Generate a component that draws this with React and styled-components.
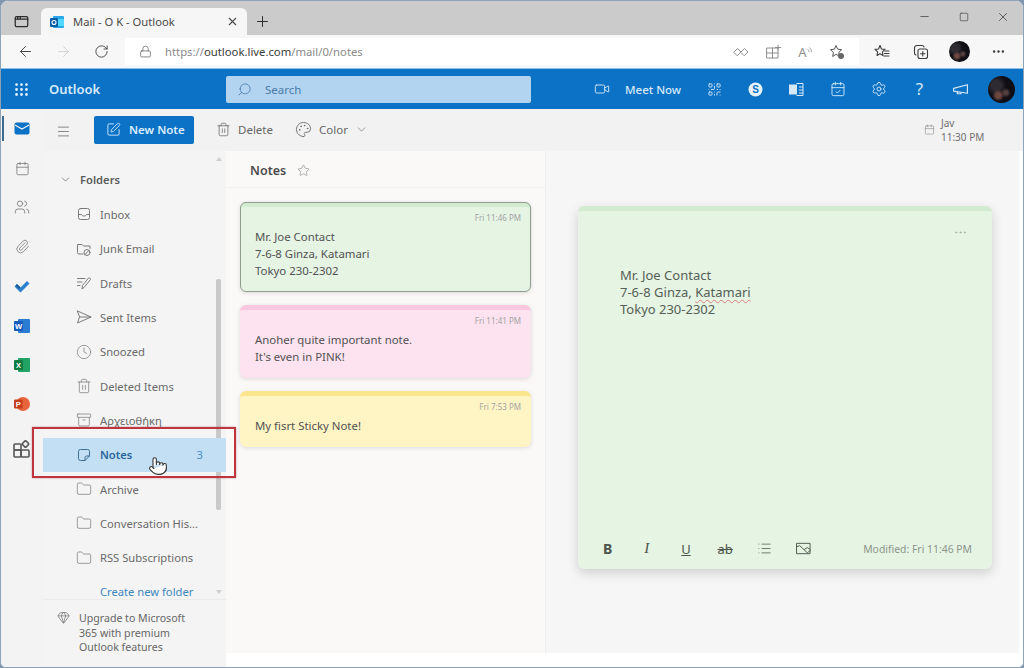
import styled, { createGlobalStyle } from "styled-components";
import {
  ArrowLeft, ArrowRight, RotateCw, Lock, X, Plus, Minus, Square, Star, Ellipsis, Search,
  SquarePen, Trash2, Palette, ChevronDown, Menu, Video, QrCode, Settings,
  CalendarCheck, Calendar, Users, Paperclip, Clock, Archive,
  Folder, Gem, List, Pointer, Grip, AppWindow,
} from "lucide-react";

const GlobalStyle = createGlobalStyle`
  html, body { margin: 0; padding: 0; background: #7f98b2; }
  * { box-sizing: border-box; }
  body { font-family: "Noto Sans", "Open Sans", "Liberation Sans", sans-serif; }
`;

const Window = styled.div`
  width: 1024px;
  height: 668px;
  display: flex;
  flex-direction: column;
  overflow: hidden;
  border: 1px solid #8fa3b7;
  border-radius: 8px 8px 6px 6px;
  background: #fff;
`;

const TabStrip = styled.div`
  height: 34px;
  flex: none;
  display: flex;
  align-items: flex-end;
  background: #cbcbcb;
  color: #2b2b2b;
`;

const StripButton = styled.div`
  width: ${(p) => p.$w || 40}px;
  height: 27px;
  display: flex;
  align-items: center;
  justify-content: center;
`;

const Tab = styled.div`
  width: 206px;
  height: 27px;
  padding: 0 8px 0 9px;
  display: flex;
  align-items: center;
  background: #f6f6f6;
  border-radius: 6px 6px 0 0;
  font-size: 11.2px;
  color: #4a4a4a;
  span { flex: 1; margin: -1px 0 0 9px; }
`;

const WindowControls = styled.div`
  margin-left: auto;
  height: 34px;
  display: flex;
  align-items: center;
  color: #444;
`;

const WindowButton = styled.div`
  width: 39.5px;
  display: flex;
  justify-content: center;
  margin-top: -3px;
`;

const AddressRow = styled.div`
  height: 34px;
  flex: none;
  padding-left: 5px;
  display: flex;
  align-items: center;
  background: #f7f7f7;
  border-bottom: 1px solid #8cc0e8;
`;

const NavButton = styled.div`
  width: 38px;
  display: flex;
  justify-content: center;
  color: ${(p) => (p.$off ? "#d4d4d4" : "#444")};
`;

const AddressField = styled.div`
  width: 734px;
  height: 27px;
  margin-left: 5px;
  padding: 0 6px 0 14px;
  display: flex;
  align-items: center;
  background: #fff;
  font-size: 11.3px;
  color: #8a8a8a;
  b { font-weight: 400; color: #3c3c3c; }
`;

const Url = styled.div`
  flex: 1;
  margin-left: 13px;
`;

const FieldIcon = styled.div`
  width: 32px;
  display: flex;
  justify-content: center;
  align-items: center;
  font-size: 13px;
  color: #8e8e8e;
`;

const BrowserTools = styled.div`
  display: flex;
  align-items: center;
  color: #3c3c3c;
  padding-left: 3px;
`;

const BrowserTool = styled.div`
  width: 39px;
  display: flex;
  justify-content: center;
`;

const Avatar = styled.div`
  width: ${(p) => p.$size}px;
  height: ${(p) => p.$size}px;
  border-radius: 50%;
  flex: none;
  background:
    radial-gradient(circle at 38% 72%, #6d4742 0 9%, transparent 24%),
    radial-gradient(circle at 66% 62%, #54413f 0 7%, transparent 20%),
    radial-gradient(circle at 30% 35%, #2f2b33 0 18%, transparent 40%),
    #0f0e14;
`;

const HeaderBar = styled.header`
  height: 40px;
  flex: none;
  display: flex;
  align-items: center;
  background: #0b72c6;
  color: #d9ecfb;
`;

const Waffle = styled.div`
  width: 40px;
  display: flex;
  justify-content: center;
  color: #e2f0fb;
`;

const Brand = styled.div`
  width: 185px;
  padding-left: 8px;
  font-size: 13px;
  font-weight: 600;
  color: #d8ebfa;
`;

const SearchBox = styled.div`
  width: 305px;
  height: 27px;
  padding-left: 11px;
  display: flex;
  align-items: center;
  gap: 13px;
  border-radius: 2px;
  background: #b2d4f1;
  color: #4b7ba6;
  font-size: 11.5px;
`;

const SearchGlass = styled(Search)`
  transform: scaleX(-1);
`;

const MeetNow = styled.div`
  margin-left: 63px;
  width: 100px;
  display: flex;
  align-items: center;
  gap: 15px;
  font-size: 11.5px;
  font-weight: 500;
  color: #d4e8f9;
  white-space: nowrap;
`;

const HeaderIcon = styled.div`
  width: 41px;
  display: flex;
  justify-content: center;
  font-size: 17px;
  line-height: 20px;
  color: #d4e8f9;
`;

const Body = styled.div`
  flex: 1;
  min-height: 0;
  display: flex;
`;

const Rail = styled.nav`
  width: 42px;
  flex: none;
  background: #f3f3f3;
  display: flex;
  flex-direction: column;
`;

const RailItem = styled.div`
  height: 39.4px;
  flex: none;
  display: flex;
  align-items: center;
  justify-content: center;
  color: #7b7b7b;
  position: relative;
`;

const RailMark = styled.div`
  position: absolute;
  left: 1px;
  top: 7px;
  width: 2px;
  height: 25px;
  background: #3d6b8e;
`;

const RailBottom = styled(RailItem)`
  margin-top: 5px;
  color: #555;
`;

const Main = styled.div`
  flex: 1;
  min-width: 0;
  display: flex;
  flex-direction: column;
`;

const CommandBar = styled.div`
  height: 42px;
  flex: none;
  padding-bottom: 1px;
  display: flex;
  align-items: center;
  background: #f2f2f2;
  color: #666;
  font-size: 11.5px;
`;

const MenuButton = styled.div`
  width: 40px;
  padding-left: 13px;
  margin-right: 11px;
  display: flex;
  margin-top: 4px;
`;

const NewNote = styled.button`
  width: 100px;
  height: 28px;
  border: 0;
  border-radius: 2px;
  padding: 0 0 0 12px;
  display: flex;
  align-items: center;
  gap: 8px;
  background: #0b72c6;
  color: #dbeefc;
  font: 600 11.5px "Noto Sans", sans-serif;
`;

const CommandItem = styled.div`
  margin-left: ${(p) => p.$gap}px;
  display: flex;
  align-items: center;
  gap: ${(p) => p.$inner || 7}px;
`;

const Reminder = styled.div`
  margin-left: auto;
  width: 99px;
  display: flex;
  align-items: center;
  gap: 6px;
  color: #8b8b8b;
  font-size: 10px;
  line-height: 14px;
  div { color: #6f6f6f; }
`;

const Content = styled.div`
  flex: 1;
  min-height: 0;
  display: flex;
`;

const FolderPane = styled.aside`
  width: 183px;
  flex: none;
  display: flex;
  flex-direction: column;
  background: #f4f4f4;
`;

const FolderScroll = styled.div`
  height: 448px;
  flex: none;
  position: relative;
  padding-top: 11px;
`;

const ScrollArrow = styled.div`
  position: absolute;
  left: 173px;
  top: ${(p) => p.$top}px;
  border-left: 3px solid transparent;
  border-right: 3px solid transparent;
  border-${(p) => (p.$up ? "bottom" : "top")}: 4px solid #cfcfcf;
`;

const ScrollThumb = styled.div`
  position: absolute;
  left: 173px;
  top: 128px;
  width: 5px;
  height: 231px;
  background: #c9c9c9;
  border-radius: 2px;
`;

const FolderHeading = styled.div`
  height: 35.3px;
  padding: 0 0 1px 16px;
  display: flex;
  align-items: center;
  gap: 8px;
  font-size: 11.2px;
  font-weight: 600;
  color: #5a5a5a;
`;

const FolderRow = styled.div`
  height: 34.33px;
  padding: 0 23px 0 33px;
  position: relative;
  display: flex;
  align-items: center;
  gap: 8px;
  font-size: 11.2px;
  background: ${(p) => (p.$active ? "#c3dff3" : "transparent")};
  color: ${(p) => (p.$active ? "#2a6597" : "#6a6a6a")};
  font-weight: ${(p) => (p.$active ? 600 : 400)};
  > svg { flex: none; color: ${(p) => (p.$active ? "#3d6e96" : "#7a7a7a")}; }
  span { flex: 1; white-space: nowrap; }
`;

const Count = styled.em`
  font-style: normal;
  font-weight: 400;
  color: #4a8dc4;
`;

const Callout = styled.div`
  position: absolute;
  inset: -11px -10px -6px -11px;
  border: 2px solid #c0343d;
  box-shadow: 0 0 2px rgba(120, 40, 40, 0.4);
  pointer-events: none;
`;

const Cursor = styled.div`
  position: absolute;
  left: 105px;
  top: 18px;
  svg { color: #333; fill: #fff; }
`;

const CreateFolder = styled.div`
  height: 24px;
  padding: 10px 0 0 57px;
  font-size: 11.2px;
  line-height: 14px;
  color: #3d87bd;
`;

const Upsell = styled.div`
  flex: 1;
  padding: 11px 0 0 14px;
  display: flex;
  gap: 9px;
  border-top: 1px solid #ebebeb;
  font-size: 10.6px;
  line-height: 14.5px;
  color: #666;
  svg { flex: none; color: #6d6d6d; }
`;

const Stage = styled.div`
  flex: 1;
  min-width: 0;
  display: flex;
  padding: 0 4px 14px 0;
  background: #fff;
`;

const NotesPane = styled.section`
  width: 320px;
  flex: none;
  background: #faf9f8;
  border-right: 1px solid #efeeed;
`;

const NotesHeader = styled.div`
  height: 37px;
  padding: 2px 0 0 24px;
  display: flex;
  align-items: center;
  gap: 11px;
  font-size: 12.5px;
  font-weight: 600;
  color: #4b4b4b;
  border-bottom: 1px solid #f1f0ef;
  svg { color: #8a8a8a; }
`;

const NoteList = styled.div`
  padding: 14px 14px 0 14px;
  display: flex;
  flex-direction: column;
  gap: 13px;
`;

const NoteCard = styled.article`
  padding: 5px 10px 13.5px 15px;
  border-radius: 6px;
  border-top: 5px solid ${(p) => p.$strip};
  background: ${(p) => p.$fill};
  outline: ${(p) => (p.$selected ? "1px solid #8f9c90" : "none")};
  outline-offset: -1px;
  box-shadow: 0 1px 4px rgba(0, 0, 0, 0.13);
  font-size: 11.4px;
  line-height: 17px;
  color: #525252;
`;

const NoteDate = styled.div`
  height: 15.5px;
  font-size: 8px;
  line-height: 12px;
  text-align: right;
  color: #a3a3a3;
`;

const ReadingPane = styled.main`
  flex: 1;
  min-width: 0;
  padding: 55px 27px 0 32px;
  background: #f7f6f6;
`;

const Sticky = styled.article`
  height: 363px;
  display: flex;
  flex-direction: column;
  padding: 0 20px 0 24px;
  border-top: 5px solid #d3ebd0;
  border-radius: 6px;
  background: #e5f4e3;
  box-shadow: 0 4px 12px rgba(0, 0, 0, 0.16);
`;

const StickyMenu = styled.div`
  align-self: flex-end;
  margin-top: 12px;
  height: 18px;
  color: #9aa39a;
  padding-right: 4px;
`;

const StickyText = styled.div`
  margin: 26px 0 0 18px;
  font-size: 13px;
  line-height: 17px;
  color: #566056;
  flex: 1;
  u { text-decoration: underline wavy #d98080 1px; text-underline-offset: 2px; }
`;

const Formatting = styled.div`
  height: 39px;
  margin: 0 0 1px -10px;
  display: flex;
  align-items: center;
  color: #4b554b;
`;

const FormatButton = styled.div`
  width: 39.2px;
  margin-left: -4px;
  margin-right: 4px;
  display: flex;
  justify-content: center;
  font-family: ${(p) => (p.$serif ? '"Liberation Serif", serif' : "inherit")};
  font-size: ${(p) => p.$size || 13}px;
  font-weight: ${(p) => p.$weight || 400};
  font-style: ${(p) => (p.$italic ? "italic" : "normal")};
  text-decoration: ${(p) => p.$line || "none"};
`;

const Modified = styled.div`
  margin-left: auto;
  font-size: 10.4px;
  color: #8d948d;
`;

function OutlookMark() {
  return (
    <svg width="14" height="14" viewBox="0 0 14 14">
      <rect x="3" y="1" width="11" height="12" rx="1" fill="#28a8ea" />
      <rect x="7" y="4" width="7" height="7" fill="#50d9ff" />
      <rect x="0" y="3" width="8" height="9" rx="1" fill="#0a5fa8" />
      <circle cx="4" cy="7.5" r="2" fill="none" stroke="#fff" strokeWidth="1.1" />
    </svg>
  );
}

function LineIcon({ size = 16, width = 1, children }) {
  return (
    <svg width={size} height={size} viewBox="0 0 16 16" fill="none" stroke="currentColor" strokeWidth={width} strokeLinecap="round" strokeLinejoin="round">
      {children}
    </svg>
  );
}

function MailFilled() {
  return (
    <svg width="16" height="13" viewBox="0 0 16 13">
      <rect x="0.5" y="0.5" width="15" height="12" rx="2" fill="#0b72c6" />
      <path d="M1 3 L8 7 L15 3" fill="none" stroke="#f3f3f3" strokeWidth="1.1" />
    </svg>
  );
}

function AppsIcon() {
  return (
    <svg width="18" height="18" viewBox="0 0 18 18" fill="none" stroke="currentColor" strokeWidth="1.6">
      <rect x="1" y="4" width="7" height="6" rx="1" />
      <rect x="1" y="10" width="7" height="7" rx="1" />
      <rect x="8" y="10" width="8" height="7" rx="1" />
      <rect x="10" y="1.5" width="5" height="5" rx="1" transform="rotate(45 12.5 4)" />
    </svg>
  );
}

function ChromeAppIcon({ back, front, letter }) {
  return (
    <svg width="16" height="16" viewBox="0 0 16 16">
      <rect x="4" y="1" width="12" height="14" rx="1" fill={back} />
      <rect x="0" y="3" width="9" height="10" rx="1" fill={front} />
      <text x="4.5" y="11" fontSize="7.5" fontWeight="700" textAnchor="middle" fill="#fff" fontFamily="Liberation Sans">{letter}</text>
    </svg>
  );
}

function PowerPointIcon() {
  return (
    <svg width="16" height="16" viewBox="0 0 16 16">
      <circle cx="9" cy="8" r="7" fill="#e8643c" />
      <rect x="0" y="3.5" width="8.5" height="9" rx="1" fill="#c43e1c" />
      <text x="4.2" y="11" fontSize="7.5" fontWeight="700" textAnchor="middle" fill="#fff" fontFamily="Liberation Sans">P</text>
    </svg>
  );
}

function TodoIcon() {
  return (
    <svg width="16" height="13" viewBox="0 0 16 13">
      <path d="M0.5 6.5 L3 4 L6.5 7.5 L13 1 L15.5 3.5 L6.5 12.5 Z" fill="#2e7fd0" />
      <path d="M3 4 L6.5 7.5 L5 9 L1.5 5.5 Z" fill="#1a5a9c" />
    </svg>
  );
}

function SkypeIcon() {
  return (
    <svg width="15" height="15" viewBox="0 0 15 15">
      <circle cx="7.5" cy="7.5" r="7" fill="#e6f2fb" />
      <text x="7.5" y="11" fontSize="10" fontWeight="700" textAnchor="middle" fill="#0b72c6" fontFamily="Liberation Sans">S</text>
    </svg>
  );
}

function OfficeMark() {
  return (
    <svg width="15" height="15" viewBox="0 0 15 15" fill="none" stroke="#d4e8f9">
      <rect x="0.5" y="3" width="7" height="9" fill="#d4e8f9" />
      <path d="M7.5 1.5 H14 V13.5 H7.5 M10 5 H14 M10 8 H14 M10 11 H14" />
    </svg>
  );
}

const InboxIcon = () => (
  <LineIcon><rect x="2.5" y="2.5" width="11" height="11" rx="2" /><path d="M2.5 8.5 H5.5 C6 10.5 10 10.5 10.5 8.5 H13.5" /></LineIcon>
);
const JunkIcon = () => (
  <LineIcon><path d="M7 13 H3 A1.5 1.5 0 0 1 1.5 11.5 V3.5 H6 L7.5 5 H14 V7.5" /><circle cx="11" cy="11.5" r="3" /><path d="M9 13.5 L13 9.5" /></LineIcon>
);
const DraftIcon = () => (
  <LineIcon><path d="M1.5 3.5 H9 M1.5 7 H6 M1.5 10.5 H4" /><path d="M6 13.5 L6.5 10.5 L12.5 3 A1.4 1.4 0 0 1 14.5 4.5 L8.5 12 Z" /></LineIcon>
);
const SendIcon = () => (
  <LineIcon><path d="M1.5 2 L15 8 L1.5 14 L3.5 8 Z M3.5 8 H15" /></LineIcon>
);
const NoteIcon = () => (
  <LineIcon><path d="M9 13.5 H4.5 A2 2 0 0 1 2.5 11.5 V4.5 A2 2 0 0 1 4.5 2.5 H11.5 A2 2 0 0 1 13.5 4.5 V9 L9 13.5 V10.5 A1.5 1.5 0 0 1 10.5 9 H13.5" /></LineIcon>
);
const ReadingModeIcon = () => (
  <LineIcon><path d="M1 8 L4.5 4.5 L8 8 L4.5 11.5 Z M8 8 L11.5 4.5 L15 8 L11.5 11.5 Z" /></LineIcon>
);
const SplitIcon = () => (
  <LineIcon><rect x="2" y="4" width="11" height="10" /><path d="M7.5 4 V14 M2 9 H13 M13 1 V6 M10.5 3.5 H15.5" /></LineIcon>
);
const SoundWaves = () => (
  <svg width="5" height="10" viewBox="0 0 5 10" fill="none" stroke="currentColor" strokeWidth="0.8">
    <path d="M0.5 2 Q2 3 2 5 M2.5 0.5 Q4.5 2 4.5 5" />
  </svg>
);
const FavAddIcon = () => (
  <svg width="16" height="16" viewBox="0 0 16 16" fill="none" stroke="#555">
    <path d="M7 1.5 L8.7 5.2 L12.7 5.7 L9.8 8.4 L10.3 12 L7 10.3 L3.7 12.5 L4.4 8.4 L1.5 5.7 L5.4 5.2 Z" />
    <circle cx="12" cy="12" r="3" fill="#666" stroke="none" />
  </svg>
);
const FavListIcon = () => (
  <LineIcon width={1.1}><path d="M6 1.5 L7.5 5 L11 5.4 L8.4 7.8 L9 11.5 L6 9.7 L3 11.5 L3.6 7.8 L1 5.4 L4.5 5 Z" /><path d="M11 7 H15 M10.5 9.5 H15 M10 12 H15" /></LineIcon>
);
const CollectionsIcon = () => (
  <LineIcon width={1.1}><path d="M3 11 A2 2 0 0 1 1.5 9 V4 A2.5 2.5 0 0 1 4 1.5 H9 A2 2 0 0 1 11 3" /><rect x="5" y="5" width="9.5" height="9.5" rx="2" /><path d="M9.75 7.5 V12 M7.5 9.75 H12" /></LineIcon>
);
const MegaphoneIcon = () => (
  <LineIcon size={17} width={1.1}><path d="M1.5 7 L14.5 3.5 V11.5 L1.5 9.5 Z M5 10 V12 H8.5 V10.8" /></LineIcon>
);
const PictureIcon = () => (
  <LineIcon size={15}><rect x="1" y="2.5" width="14" height="11" /><path d="M1 6 L4 5 L12 12.5 L15 10.5 M9 9 L12 7 L15 9" /></LineIcon>
);

const folders = [
  { icon: InboxIcon, label: "Inbox" },
  { icon: JunkIcon, label: "Junk Email" },
  { icon: DraftIcon, label: "Drafts" },
  { icon: SendIcon, label: "Sent Items" },
  { icon: () => <Clock size={16} strokeWidth={1.1} />, label: "Snoozed" },
  { icon: () => <Trash2 size={16} strokeWidth={1.1} />, label: "Deleted Items" },
  { icon: () => <Archive size={16} strokeWidth={1.1} />, label: "Αρχειοθήκη" },
  { icon: NoteIcon, label: "Notes", count: 3, active: true },
  { icon: () => <Folder size={16} strokeWidth={1.1} />, label: "Archive" },
  { icon: () => <Folder size={16} strokeWidth={1.1} />, label: "Conversation His..." },
  { icon: () => <Folder size={16} strokeWidth={1.1} />, label: "RSS Subscriptions" },
];

const notes = [
  { date: "Fri 11:46 PM", lines: ["Mr. Joe Contact", "7-6-8 Ginza, Katamari", "Tokyo 230-2302"], strip: "#d3ebd0", fill: "#e5f4e3", selected: true },
  { date: "Fri 11:41 PM", lines: ["Anoher quite important note.", "It's even in PINK!"], strip: "#f9c8de", fill: "#fde2ef" },
  { date: "Fri 7:53 PM", lines: ["My fisrt Sticky Note!"], strip: "#fbe58e", fill: "#fff5c4" },
];

export default function App() {
  return (
    <>
      <GlobalStyle />
      <Window>
        <TabStrip>
          <StripButton><AppWindow size={15} strokeWidth={2} /></StripButton>
          <Tab>
            <OutlookMark />
            <span>Mail - O K - Outlook</span>
            <X size={13} strokeWidth={2} />
          </Tab>
          <StripButton $w={30}><Plus size={17} strokeWidth={1.4} /></StripButton>
          <WindowControls>
            <WindowButton><Minus size={13} strokeWidth={1.4} /></WindowButton>
            <WindowButton><Square size={10} strokeWidth={1.6} /></WindowButton>
            <WindowButton><X size={14} strokeWidth={1.4} /></WindowButton>
          </WindowControls>
        </TabStrip>

        <AddressRow>
          <NavButton><ArrowLeft size={17} strokeWidth={1.4} /></NavButton>
          <NavButton $off><ArrowRight size={17} strokeWidth={1.4} /></NavButton>
          <NavButton><RotateCw size={15} strokeWidth={1.5} /></NavButton>
          <AddressField>
            <Lock size={13} strokeWidth={1.4} color="#666" />
            <Url>https://<b>outlook.live.com</b>/mail/0/notes</Url>
            <FieldIcon><ReadingModeIcon /></FieldIcon>
            <FieldIcon><SplitIcon /></FieldIcon>
            <FieldIcon>A<SoundWaves /></FieldIcon>
            <FieldIcon><FavAddIcon /></FieldIcon>
          </AddressField>
          <BrowserTools>
            <BrowserTool><FavListIcon /></BrowserTool>
            <BrowserTool><CollectionsIcon /></BrowserTool>
            <BrowserTool><Avatar $size={21} /></BrowserTool>
            <BrowserTool><Ellipsis size={15} strokeWidth={2} /></BrowserTool>
          </BrowserTools>
        </AddressRow>

        <HeaderBar>
          <Waffle><Grip size={17} strokeWidth={2} /></Waffle>
          <Brand>Outlook</Brand>
          <SearchBox>
            <SearchGlass size={15} strokeWidth={1.3} />
            Search
          </SearchBox>
          <MeetNow>
            <Video size={16} strokeWidth={1.4} />
            Meet Now
          </MeetNow>
          <HeaderIcon><QrCode size={15} strokeWidth={1.5} /></HeaderIcon>
          <HeaderIcon><SkypeIcon /></HeaderIcon>
          <HeaderIcon><OfficeMark /></HeaderIcon>
          <HeaderIcon><CalendarCheck size={16} strokeWidth={1.4} /></HeaderIcon>
          <HeaderIcon><Settings size={16} strokeWidth={1.4} /></HeaderIcon>
          <HeaderIcon>?</HeaderIcon>
          <HeaderIcon><MegaphoneIcon /></HeaderIcon>
          <HeaderIcon><Avatar $size={27} /></HeaderIcon>
        </HeaderBar>

        <Body>
          <Rail>
            <RailItem><RailMark /><MailFilled /></RailItem>
            <RailItem><Calendar size={15} strokeWidth={1.3} /></RailItem>
            <RailItem><Users size={16} strokeWidth={1.3} /></RailItem>
            <RailItem><Paperclip size={15} strokeWidth={1.3} /></RailItem>
            <RailItem><TodoIcon /></RailItem>
            <RailItem><ChromeAppIcon back="#2b7cd3" front="#185abd" letter="W" /></RailItem>
            <RailItem><ChromeAppIcon back="#21a366" front="#107c41" letter="X" /></RailItem>
            <RailItem><PowerPointIcon /></RailItem>
            <RailBottom><AppsIcon /></RailBottom>
          </Rail>

          <Main>
            <CommandBar>
              <MenuButton><Menu size={15} strokeWidth={1.2} /></MenuButton>
              <NewNote><SquarePen size={15} strokeWidth={1.4} />New Note</NewNote>
              <CommandItem $gap={22}><Trash2 size={15} strokeWidth={1.2} />Delete</CommandItem>
              <CommandItem $gap={22}><Palette size={17} strokeWidth={1.2} />Color<ChevronDown size={13} strokeWidth={1.2} /></CommandItem>
              <Reminder>
                <Calendar size={11} strokeWidth={1.3} />
                <div>Jav<br />11:30 PM</div>
              </Reminder>
            </CommandBar>

            <Content>
              <FolderPane>
                <FolderScroll>
                  <ScrollArrow $up $top={6} />
                  <ScrollThumb />
                  <ScrollArrow $top={439} />
                  <FolderHeading><ChevronDown size={13} strokeWidth={1.2} />Folders</FolderHeading>
                  {folders.map(({ icon: Icon, label, count, active }) => (
                    <FolderRow key={label} $active={active}>
                      <Icon />
                      <span>{label}</span>
                      {count && <Count>{count}</Count>}
                      {active && (
                        <>
                          <Callout />
                          <Cursor><Pointer size={20} strokeWidth={1.3} /></Cursor>
                        </>
                      )}
                    </FolderRow>
                  ))}
                  <CreateFolder>Create new folder</CreateFolder>
                </FolderScroll>
                <Upsell>
                  <Gem size={13} strokeWidth={1.3} />
                  <div>Upgrade to Microsoft<br />365 with premium<br />Outlook features</div>
                </Upsell>
              </FolderPane>

              <Stage>
                <NotesPane>
                  <NotesHeader>Notes<Star size={13} strokeWidth={1.2} /></NotesHeader>
                  <NoteList>
                    {notes.map((note) => (
                      <NoteCard key={note.date} $strip={note.strip} $fill={note.fill} $selected={note.selected}>
                        <NoteDate>{note.date}</NoteDate>
                        {note.lines.map((line) => <div key={line}>{line}</div>)}
                      </NoteCard>
                    ))}
                  </NoteList>
                </NotesPane>

                <ReadingPane>
                  <Sticky>
                    <StickyMenu><Ellipsis size={15} strokeWidth={1} /></StickyMenu>
                    <StickyText>
                      Mr. Joe Contact<br />
                      7-6-8 Ginza, <u>Katamari</u><br />
                      Tokyo 230-2302
                    </StickyText>
                    <Formatting>
                      <FormatButton $weight={700} $size={14}>B</FormatButton>
                      <FormatButton $serif $italic $size={15}>I</FormatButton>
                      <FormatButton $line="underline" $size={13}>U</FormatButton>
                      <FormatButton $line="line-through" $size={13}>ab</FormatButton>
                      <FormatButton><List size={15} strokeWidth={1.2} /></FormatButton>
                      <FormatButton><PictureIcon /></FormatButton>
                      <Modified>Modified: Fri 11:46 PM</Modified>
                    </Formatting>
                  </Sticky>
                </ReadingPane>
              </Stage>
            </Content>
          </Main>
        </Body>
      </Window>
    </>
  );
}
